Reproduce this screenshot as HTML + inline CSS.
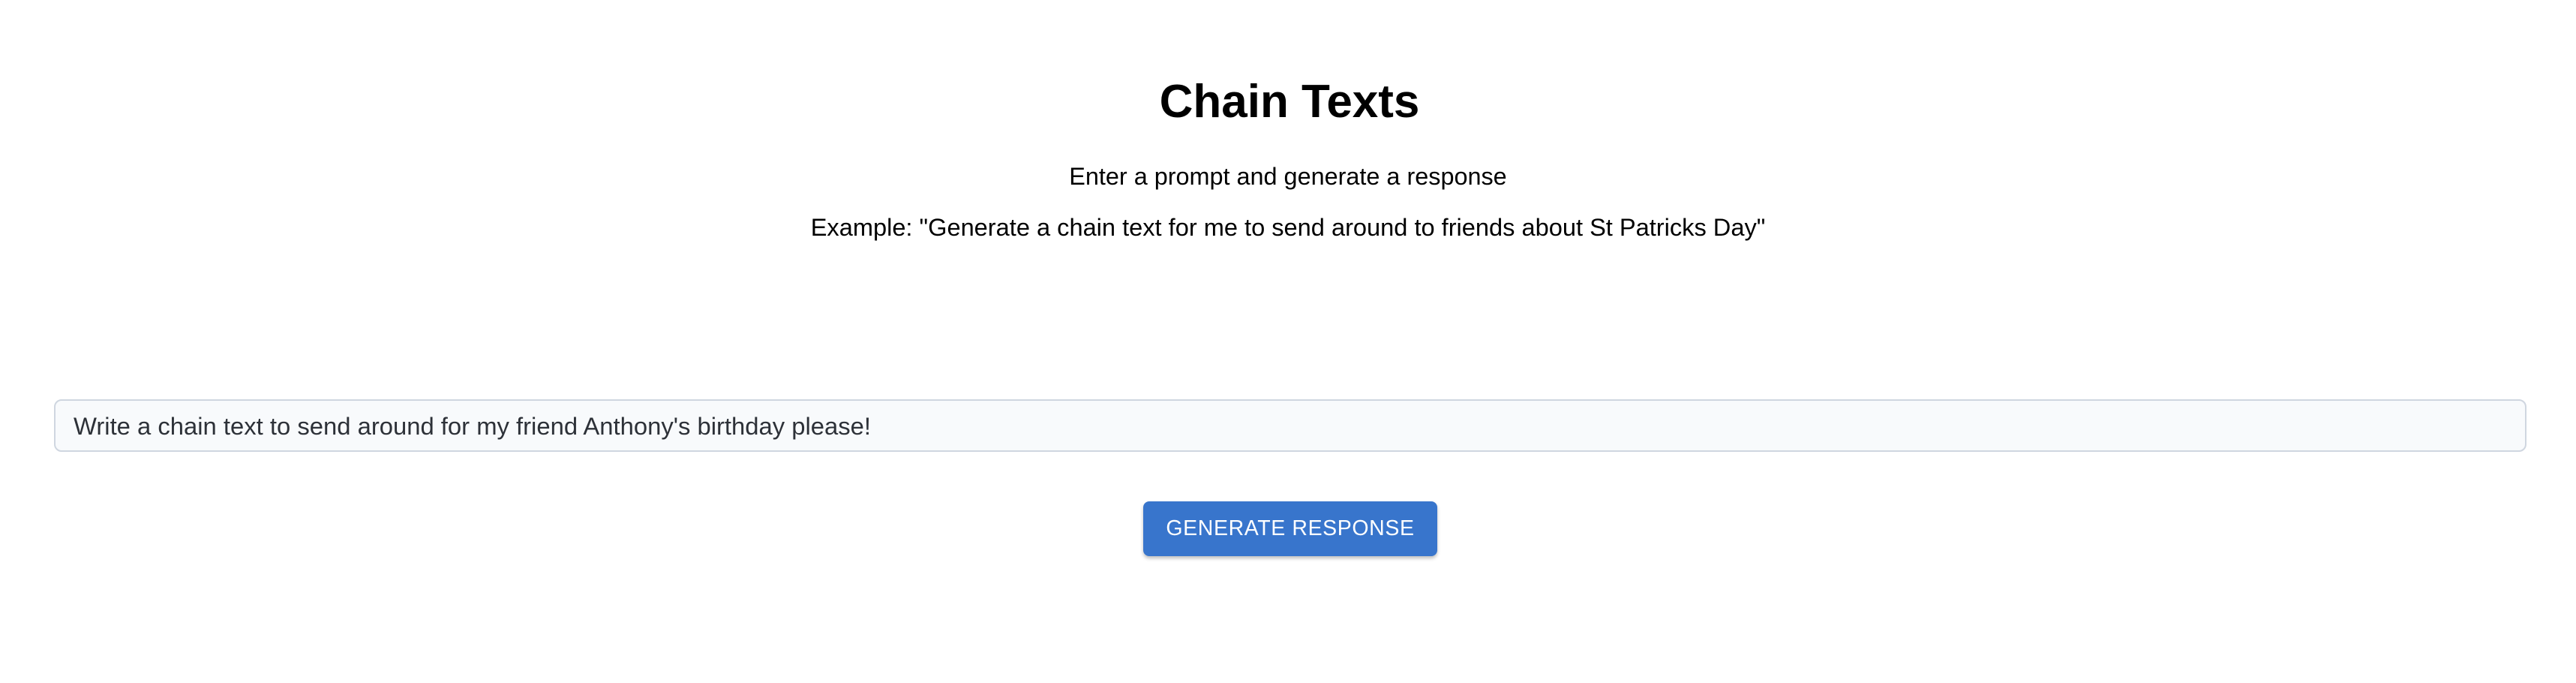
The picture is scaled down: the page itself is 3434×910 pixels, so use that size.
<!DOCTYPE html>
<html><head><meta charset="utf-8"><style>
html,body{margin:0;padding:0;background:#fff;width:3434px;height:910px;overflow:hidden;font-family:"Liberation Sans",sans-serif;}
.t{position:absolute;left:0;width:3434px;text-align:center;color:#000;white-space:nowrap}
h1{position:absolute;left:0;width:3438px;text-align:center;margin:0;font-size:62px;font-weight:bold;top:98px;line-height:76px}
.inp{position:absolute;left:72px;top:532px;width:3296px;height:70px;box-sizing:border-box;border:2px solid #cfd6e0;border-radius:10px;background:#f8fafc;}
.inp span{position:absolute;left:24px;top:15px;font-size:32.8px;color:#2d3138;white-space:nowrap}
.btn{position:absolute;left:1524px;top:668px;width:392px;height:73px;background:#3875cc;border-radius:8px;box-shadow:0 3px 5px rgba(0,0,0,0.25);color:#fff;font-size:28.5px;text-align:center;line-height:73px;letter-spacing:0.6px}
</style></head><body>
<h1>Chain Texts</h1>
<div class="t" style="top:216px;font-size:32.4px;line-height:38px">Enter a prompt and generate a response</div>
<div class="t" style="top:284px;font-size:32.6px;line-height:38px">Example: "Generate a chain text for me to send around to friends about St Patricks Day"</div>
<div class="inp"><span>Write a chain text to send around for my friend Anthony's birthday please!</span></div>
<div class="btn">GENERATE RESPONSE</div>
</body></html>
